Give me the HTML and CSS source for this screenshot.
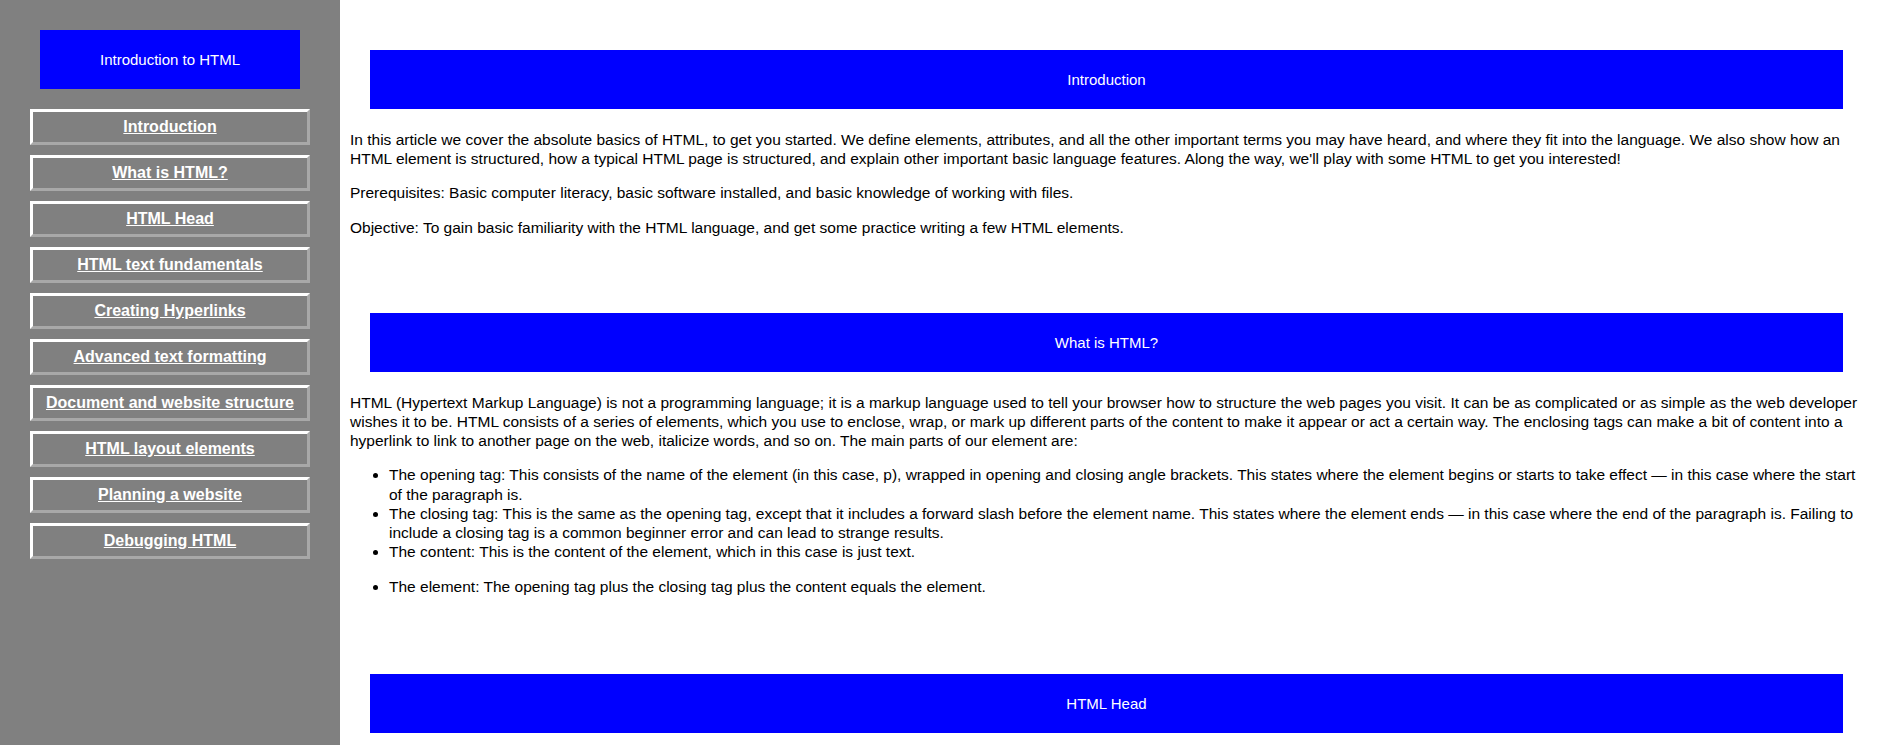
FILE: index.html
```html
<!DOCTYPE html>
<html lang="en">
<head>
<meta charset="utf-8">
<title>Introduction to HTML</title>
<link rel="stylesheet" href="styles.css">
</head>
<body>
<div class="page">
  <aside class="sidebar">
    <div class="side-title">Introduction to HTML</div>
    <nav class="nav">
      <a class="nav-btn" href="#intro">Introduction</a>
      <a class="nav-btn" href="#what">What is HTML?</a>
      <a class="nav-btn" href="#head">HTML Head</a>
      <a class="nav-btn" href="#text">HTML text fundamentals</a>
      <a class="nav-btn" href="#links">Creating Hyperlinks</a>
      <a class="nav-btn" href="#adv">Advanced text formatting</a>
      <a class="nav-btn" href="#doc">Document and website structure</a>
      <a class="nav-btn" href="#layout">HTML layout elements</a>
      <a class="nav-btn" href="#plan">Planning a website</a>
      <a class="nav-btn" href="#debug">Debugging HTML</a>
    </nav>
  </aside>
  <main class="main">
    <section class="section" id="intro">
      <h2 class="section-head">Introduction</h2>
      <p class="text">In this article we cover the absolute basics of HTML, to get you started. We define elements, attributes, and all the other important terms you may have heard, and where they fit into the language. We also show how an HTML element is structured, how a typical HTML page is structured, and explain other important basic language features. Along the way, we'll play with some HTML to get you interested!</p>
      <p class="text">Prerequisites: Basic computer literacy, basic software installed, and basic knowledge of working with files.</p>
      <p class="text">Objective: To gain basic familiarity with the HTML language, and get some practice writing a few HTML elements.</p>
    </section>
    <section class="section" id="what">
      <h2 class="section-head">What is HTML?</h2>
      <p class="text">HTML (Hypertext Markup Language) is not a programming language; it is a markup language used to tell your browser how to structure the web pages you visit. It can be as complicated or as simple as the web developer wishes it to be. HTML consists of a series of elements, which you use to enclose, wrap, or mark up different parts of the content to make it appear or act a certain way. The enclosing tags can make a bit of content into a hyperlink to link to another page on the web, italicize words, and so on. The main parts of our element are:</p>
      <ul class="list">
        <li>The opening tag: This consists of the name of the element (in this case, p), wrapped in opening and closing angle brackets. This states where the element begins or starts to take effect — in this case where the start of the paragraph is.</li>
        <li>The closing tag: This is the same as the opening tag, except that it includes a forward slash before the element name. This states where the element ends — in this case where the end of the paragraph is. Failing to include a closing tag is a common beginner error and can lead to strange results.</li>
        <li>The content: This is the content of the element, which in this case is just text.</li>
      </ul>
      <ul class="list">
        <li>The element: The opening tag plus the closing tag plus the content equals the element.</li>
      </ul>
    </section>
    <section class="section" id="head">
      <h2 class="section-head">HTML Head</h2>
    </section>
  </main>
</div>
</body>
</html>
```
FILE: styles.css
```css
html {
  scrollbar-width: none;
}
body {
  margin: 0;
  font-family: "Liberation Sans", Arial, sans-serif;
  color: #000;
  background: #fff;
}
.page {
  display: flex;
  align-items: stretch;
  min-height: 100vh;
}
.sidebar {
  flex: 0 0 340px;
  width: 340px;
  background: #808080;
  padding-top: 30px;
  box-sizing: border-box;
}
.side-title {
  margin: 0 40px 20px;
  height: 59px;
  background: #0000ff;
  color: #fff;
  font-size: 15px;
  display: flex;
  align-items: center;
  justify-content: center;
}
.nav {
  display: flex;
  flex-direction: column;
  gap: 10px;
  margin: 0 30px;
}
.nav-btn {
  display: flex;
  align-items: center;
  justify-content: center;
  height: 36px;
  box-sizing: border-box;
  border-style: solid;
  border-width: 3px;
  border-color: #fff #a8a8a8 #a8a8a8 #fff;
  color: #fff;
  font-weight: bold;
  font-size: 16px;
  text-decoration: underline;
}
.main {
  flex: 1;
  padding: 50px 41px 0 10px;
  min-width: 0;
}
.section {
  padding-bottom: 61px;
}
.section-head {
  margin: 0 16px 21px 20px;
  height: 59px;
  background: #0000ff;
  color: #fff;
  font-size: 15px;
  font-weight: normal;
  display: flex;
  align-items: center;
  justify-content: center;
}
.text {
  font-size: 15.5px;
  line-height: 19.2px;
  margin: 0 0 15px;
}
.list {
  font-size: 15.5px;
  line-height: 19.2px;
  margin: 0 0 16px;
  padding-left: 39px;
}
```
